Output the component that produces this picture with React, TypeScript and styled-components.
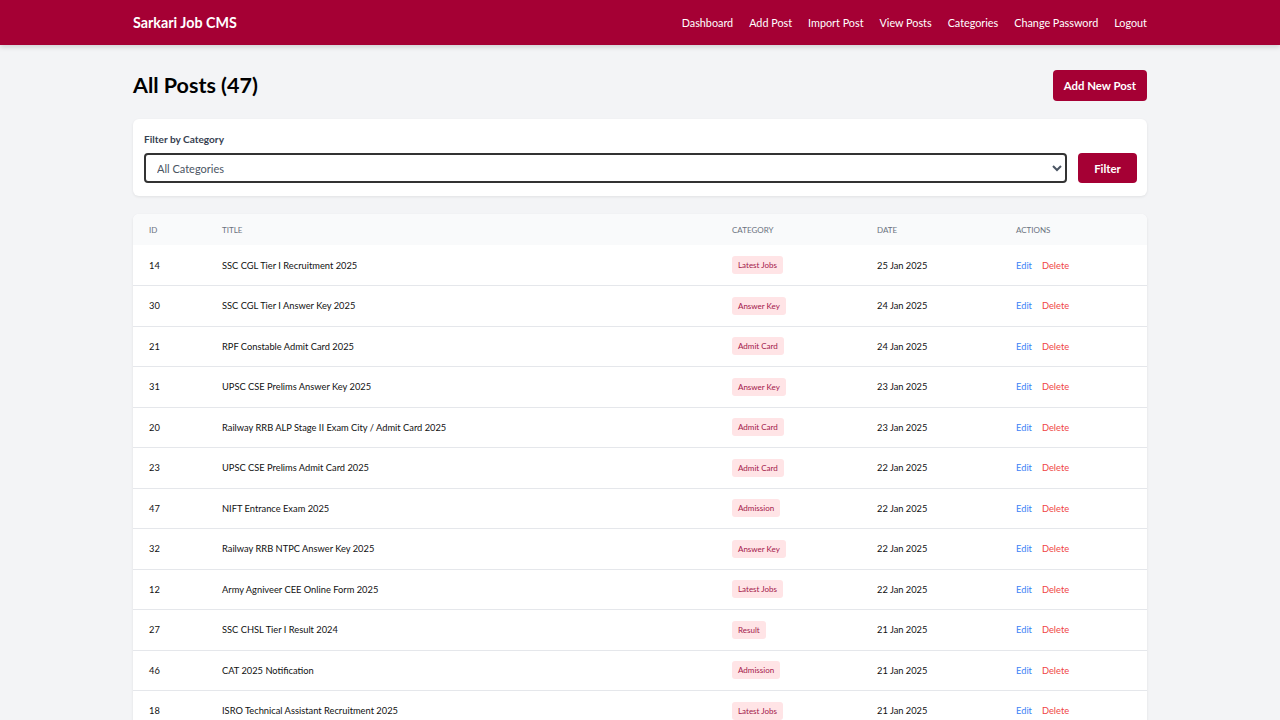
import styled, { createGlobalStyle } from "styled-components";

type Post = { id: number; title: string; category: string; date: string };

const posts: Post[] = [
  { id: 14, title: "SSC CGL Tier I Recruitment 2025", category: "Latest Jobs", date: "25 Jan 2025" },
  { id: 30, title: "SSC CGL Tier I Answer Key 2025", category: "Answer Key", date: "24 Jan 2025" },
  { id: 21, title: "RPF Constable Admit Card 2025", category: "Admit Card", date: "24 Jan 2025" },
  { id: 31, title: "UPSC CSE Prelims Answer Key 2025", category: "Answer Key", date: "23 Jan 2025" },
  { id: 20, title: "Railway RRB ALP Stage II Exam City / Admit Card 2025", category: "Admit Card", date: "23 Jan 2025" },
  { id: 23, title: "UPSC CSE Prelims Admit Card 2025", category: "Admit Card", date: "22 Jan 2025" },
  { id: 47, title: "NIFT Entrance Exam 2025", category: "Admission", date: "22 Jan 2025" },
  { id: 32, title: "Railway RRB NTPC Answer Key 2025", category: "Answer Key", date: "22 Jan 2025" },
  { id: 12, title: "Army Agniveer CEE Online Form 2025", category: "Latest Jobs", date: "22 Jan 2025" },
  { id: 27, title: "SSC CHSL Tier I Result 2024", category: "Result", date: "21 Jan 2025" },
  { id: 46, title: "CAT 2025 Notification", category: "Admission", date: "21 Jan 2025" },
  { id: 18, title: "ISRO Technical Assistant Recruitment 2025", category: "Latest Jobs", date: "21 Jan 2025" },
  { id: 25, title: "IBPS PO Mains Result 2024", category: "Result", date: "20 Jan 2025" },
];

const navLinks = ["Dashboard", "Add Post", "Import Post", "View Posts", "Categories", "Change Password", "Logout"];

const App = () => {
  return <>
    <GlobalStyle />
    <NavBar>
      <NavInner>
        <Brand>Sarkari Job CMS</Brand>
        <NavLinks>
          {navLinks.map((l) => <NavLink key={l} href="#">{l}</NavLink>)}
        </NavLinks>
      </NavInner>
    </NavBar>
    <Main>
      <PageHeader>
        <PageTitle>All Posts (47)</PageTitle>
        <PrimaryButton>Add New Post</PrimaryButton>
      </PageHeader>

      <FilterCard>
        <FilterLabel>Filter by Category</FilterLabel>
        <FilterRow>
          <Select defaultValue="all">
            <option value="all">All Categories</option>
            <option value="jobs">Latest Jobs</option>
            <option value="admit">Admit Card</option>
            <option value="result">Result</option>
          </Select>
          <FilterButton>Filter</FilterButton>
        </FilterRow>
      </FilterCard>

      <TableCard>
        <Table>
          <colgroup>
            <col style={{ width: 73 }} />
            <col style={{ width: 510 }} />
            <col style={{ width: 145 }} />
            <col style={{ width: 139 }} />
            <col />
          </colgroup>
          <thead>
            <tr>
              <Th>ID</Th>
              <Th>Title</Th>
              <Th>Category</Th>
              <Th>Date</Th>
              <Th>Actions</Th>
            </tr>
          </thead>
          <tbody>
            {posts.map((p) => (
              <Tr key={p.id}>
                <Td>{p.id}</Td>
                <Td>{p.title}</Td>
                <Td><Badge>{p.category}</Badge></Td>
                <Td>{p.date}</Td>
                <Td>
                  <ActionLink href="#">Edit</ActionLink>
                  <ActionLink href="#" $danger>Delete</ActionLink>
                </Td>
              </Tr>
            ))}
          </tbody>
        </Table>
      </TableCard>
    </Main>
  </>;
};

const GlobalStyle = createGlobalStyle`
  * { box-sizing: border-box; }
  body {
    margin: 0;
    background: #f3f4f6;
    font-family: Lato, "Open Sans", sans-serif;
    color: #111827;
  }
`;

const NavBar = styled.header`
  background: #a50034;
  height: 45px;
  box-shadow: 0 2px 5px rgba(0, 0, 0, 0.15);
`;

const NavInner = styled.div`
  width: 1014px;
  margin: 0 auto;
  height: 100%;
  display: flex;
  align-items: center;
  justify-content: space-between;
`;

const Brand = styled.div`
  color: #fff;
  font-size: 14.3px;
  font-weight: 700;
`;

const NavLinks = styled.nav`
  display: flex;
  gap: 16px;
`;

const NavLink = styled.a`
  color: #fff;
  text-decoration: none;
  font-size: 10.8px;
`;

const Main = styled.main`
  width: 1014px;
  margin: 0 auto;
  padding-top: 25px;
`;

const PageHeader = styled.div`
  display: flex;
  align-items: center;
  justify-content: space-between;
  height: 30px;
  margin-bottom: 19px;
`;

const PageTitle = styled.h1`
  margin: 0;
  font-size: 21.5px;
  font-weight: 700;
  color: #000;
`;

const PrimaryButton = styled.button`
  background: #a50034;
  color: #fff;
  border: none;
  border-radius: 4px;
  height: 31px;
  padding: 0 11px;
  font-family: inherit;
  font-size: 11.4px;
  font-weight: 700;
  cursor: pointer;
`;

const FilterCard = styled.section`
  background: #fff;
  border-radius: 6px;
  box-shadow: 0 1px 3px rgba(0, 0, 0, 0.08);
  padding: 12px 10px 13px 11px;
  margin-bottom: 18px;
`;

const FilterLabel = styled.div`
  font-size: 10.1px;
  font-weight: 700;
  color: #374151;
  line-height: 16px;
  margin-bottom: 6px;
`;

const FilterRow = styled.div`
  display: flex;
  gap: 11px;
`;

const Select = styled.select`
  flex: 1;
  height: 30px;
  border: 2px solid #333;
  border-radius: 4px;
  padding: 0 7px;
  font-family: inherit;
  font-size: 11px;
  color: #4b5563;
  background: #fff;
`;

const FilterButton = styled(PrimaryButton)`
  height: 30px;
  width: 59px;
  padding: 0;
`;

const TableCard = styled.section`
  background: #fff;
  border-radius: 6px;
  box-shadow: 0 1px 3px rgba(0, 0, 0, 0.08);
  overflow: hidden;
`;

const Table = styled.table`
  width: 100%;
  border-collapse: collapse;
  table-layout: fixed;
`;

const Th = styled.th`
  background: #f9fafb;
  text-align: left;
  font-weight: 400;
  font-size: 8px;
  text-transform: uppercase;
  color: #6b7280;
  height: 31px;
  padding: 0 16px;
`;

const Tr = styled.tr`
  border-top: 1px solid #e5e7eb;
  &:first-child { border-top: none; }
`;

const Td = styled.td`
  height: 40.5px;
  padding: 0 16px;
  font-size: 9.3px;
  color: #111111;
  white-space: nowrap;
`;

const Badge = styled.span`
  display: inline-block;
  background: #ffe4e6;
  color: #a3174a;
  border-radius: 3px;
  font-size: 8px;
  line-height: 18px;
  padding: 0 6px;
`;

const ActionLink = styled.a<{ $danger?: boolean }>`
  color: ${(p) => (p.$danger ? "#ef4444" : "#3b82f6")};
  text-decoration: none;
  font-size: 9.3px;
  margin-right: 10px;
`;

export default App;
